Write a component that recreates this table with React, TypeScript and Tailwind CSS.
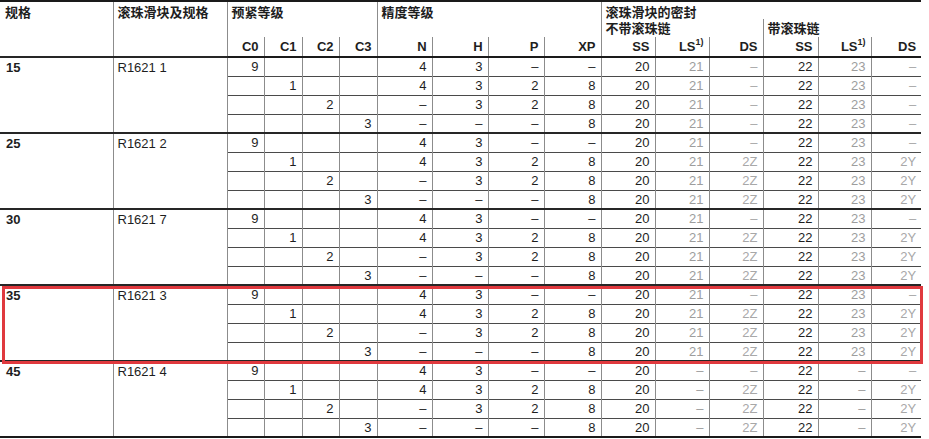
import React from 'react'

type Group = {
  size: string
  part: string
  ls: string
  ds: string[]
}

const groups: Group[] = [
  { size: '15', part: 'R1621 1', ls: 'on', ds: ['–', '–', '–', '–'] },
  { size: '25', part: 'R1621 2', ls: 'on', ds: ['–', 'Z', 'Z', 'Z'] },
  { size: '30', part: 'R1621 7', ls: 'on', ds: ['–', 'Z', 'Z', 'Z'] },
  { size: '35', part: 'R1621 3', ls: 'on', ds: ['–', 'Z', 'Z', 'Z'] },
  { size: '45', part: 'R1621 4', ls: 'off', ds: ['–', 'Z', 'Z', 'Z'] },
]

// preload / accuracy per row inside a group
const rows = [
  { c: ['9', '', '', ''], acc: ['4', '3', '–', '–'] },
  { c: ['', '1', '', ''], acc: ['4', '3', '2', '8'] },
  { c: ['', '', '2', ''], acc: ['–', '3', '2', '8'] },
  { c: ['', '', '', '3'], acc: ['–', '–', '–', '8'] },
]

const widths = [113, 114, 37, 38, 37, 38, 55, 56, 56, 57, 54, 54, 54, 55, 53, 50]

const vline = 'border-l border-l-[#8c8c8c]'
const numCell = 'h-[19px] p-0 pr-[5px] text-right align-middle leading-none'

function LS() {
  return (
    <>
      LS<sup className="text-[9px] font-bold align-super relative -top-[1px]">1)</sup>
    </>
  )
}

export default function App() {
  return (
    <div
      className="relative w-[929px] h-[439px] bg-white text-[#1e1e1e] text-[13px]"
      style={{ fontFamily: '"Liberation Sans", Arial, "Noto Sans CJK SC", sans-serif' }}
    >
      <table className="table-fixed border-collapse w-[921px]">
        <colgroup>
          {widths.map((w, i) => (
            <col key={i} style={{ width: w }} />
          ))}
        </colgroup>
        <thead>
          <tr className="h-[18px] border-t-2 border-t-[#1a1a1a]">
            <th rowSpan={3} className="p-0 pl-[5px] pt-[4px] text-left align-top font-bold leading-none">
              规格
            </th>
            <th rowSpan={3} className={`p-0 pl-[4px] pt-[4px] text-left align-top font-bold leading-none ${vline}`}>
              滚珠滑块及规格
            </th>
            <th rowSpan={2} colSpan={4} className={`p-0 pl-[4px] pt-[4px] text-left align-top font-bold leading-none ${vline}`}>
              预紧等级
            </th>
            <th rowSpan={2} colSpan={4} className={`p-0 pl-[4px] pt-[4px] text-left align-top font-bold leading-none ${vline}`}>
              精度等级
            </th>
            <th colSpan={6} className={`p-0 pl-[4px] pt-[4px] text-left align-top font-bold leading-none ${vline}`}>
              滚珠滑块的密封
            </th>
          </tr>
          <tr className="h-[18px]">
            <th colSpan={3} className={`p-0 pl-[4px] text-left align-middle font-bold leading-none ${vline}`}>
              不带滚珠链
            </th>
            <th colSpan={3} className={`p-0 pl-[4px] text-left align-middle font-bold leading-none ${vline}`}>
              带滚珠链
            </th>
          </tr>
          <tr className="h-[20px] border-b-2 border-b-[#1a1a1a]">
            {['C0', 'C1', 'C2', 'C3', 'N', 'H', 'P', 'XP', 'SS', 'LS', 'DS', 'SS', 'LS', 'DS'].map((h, i) => (
              <th key={i} className={`p-0 pr-[5px] text-right align-middle font-bold leading-none ${vline}`}>
                {h === 'LS' ? <LS /> : h}
              </th>
            ))}
          </tr>
        </thead>
        <tbody>
          {groups.map((g, gi) =>
            rows.map((r, ri) => {
              const top =
                ri === 0
                  ? gi === 0
                    ? ''
                    : 'border-t-2 border-t-[#262626]'
                  : 'border-t border-t-[#4a4a4a]'
              const last = gi === groups.length - 1 && ri === 3 ? 'border-b-2 border-b-[#1a1a1a]' : ''
              return (
                <tr key={`${gi}-${ri}`} className={`h-[19px] ${last}`}>
                  {ri === 0 && (
                    <>
                      <td rowSpan={4} className="p-0 pl-[6px] pt-[3px] align-top font-bold leading-none border-t-2 border-t-[#262626]">
                        {g.size}
                      </td>
                      <td rowSpan={4} className={`p-0 pl-[4px] pt-[3px] align-top leading-none border-t-2 border-t-[#262626] ${vline}`}>
                        {g.part}
                      </td>
                    </>
                  )}
                  {r.c.map((v, i) => (
                    <td key={`c${i}`} className={`${numCell} ${vline} ${top}`}>
                      {v}
                    </td>
                  ))}
                  {r.acc.map((v, i) => (
                    <td key={`a${i}`} className={`${numCell} ${vline} ${top}`}>
                      {v}
                    </td>
                  ))}
                  <td className={`${numCell} ${vline} ${top}`}>20</td>
                  <td className={`${numCell} ${vline} ${top} text-[#9d9d9d]`}>{g.ls === 'on' ? '21' : '–'}</td>
                  <td className={`${numCell} ${vline} ${top} text-[#a8a8a8]`}>{g.ds[ri] === 'Z' ? '2Z' : '–'}</td>
                  <td className={`${numCell} ${vline} ${top}`}>22</td>
                  <td className={`${numCell} ${vline} ${top} text-[#9d9d9d]`}>{g.ls === 'on' ? '23' : '–'}</td>
                  <td className={`${numCell} ${vline} ${top} text-[#a8a8a8]`}>{g.ds[ri] === 'Z' ? '2Y' : '–'}</td>
                </tr>
              )
            })
          )}
        </tbody>
      </table>

      {/* highlight box over size 35 */}
      <div className="absolute left-[2px] top-[286px] w-[921px] h-[78px] border-[3px] border-[#e0393e] pointer-events-none" />
    </div>
  )
}
